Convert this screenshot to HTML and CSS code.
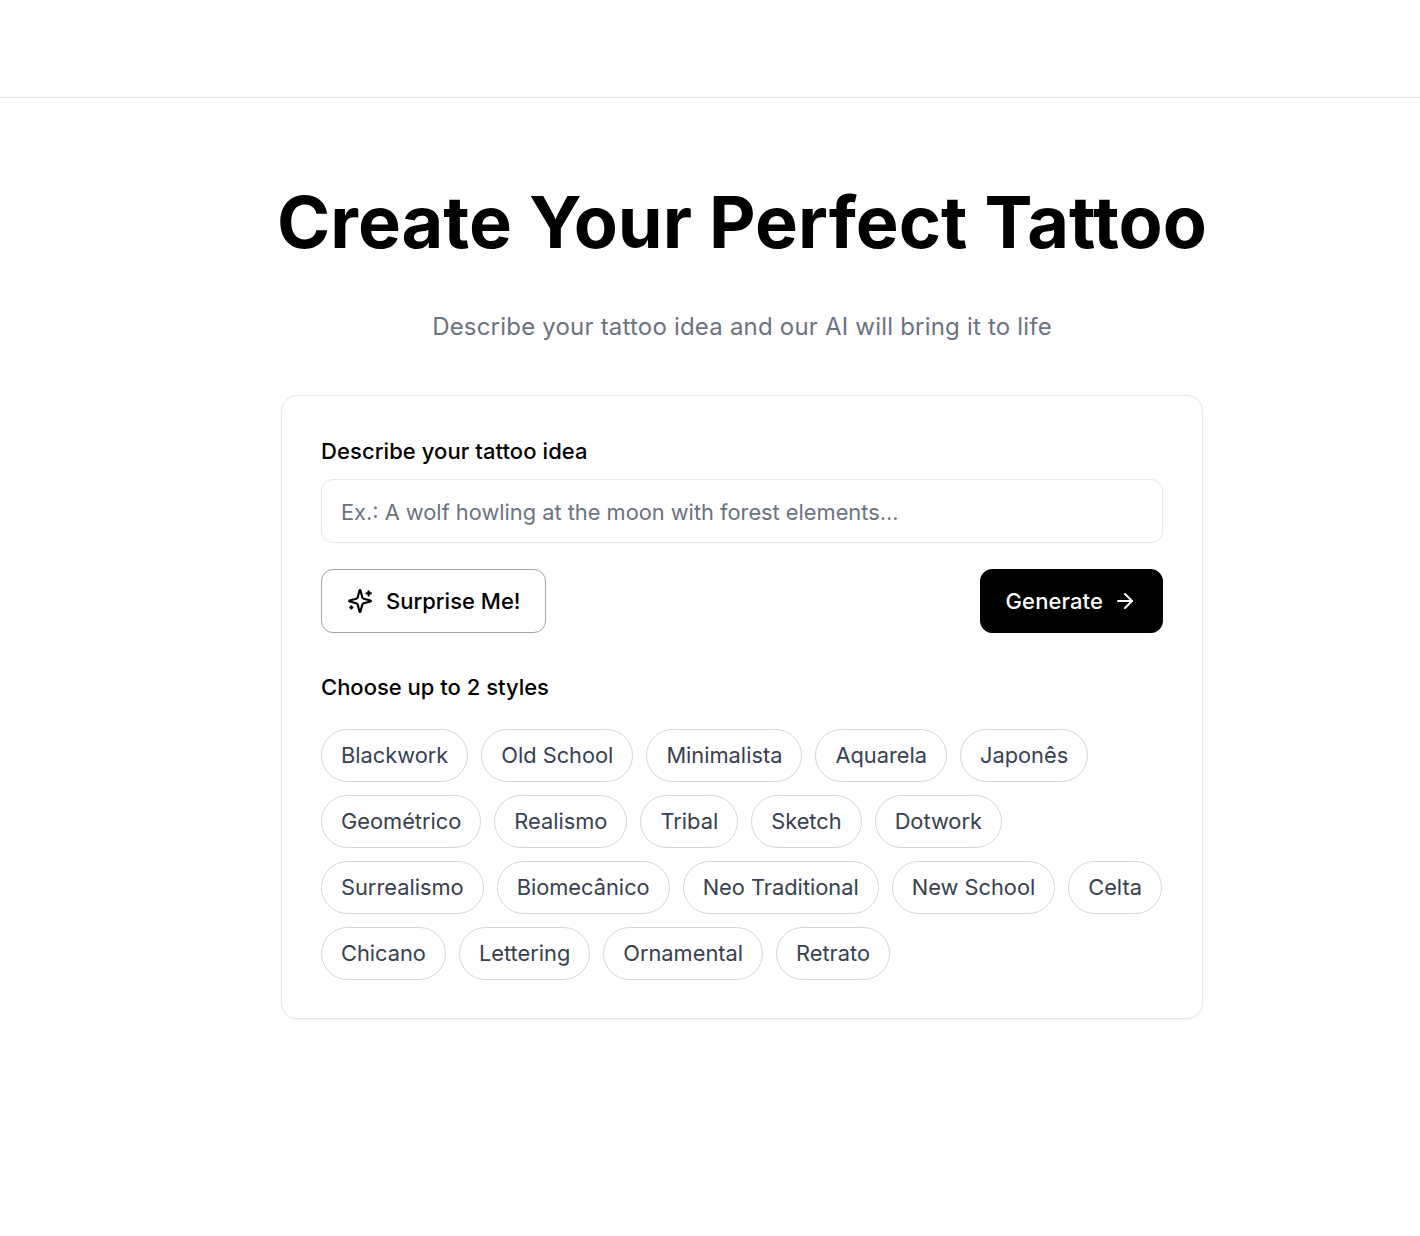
FILE: index.html
```html
<!DOCTYPE html>
<html lang="en">
<head>
<meta charset="utf-8">
<title>Create Your Perfect Tattoo</title>
<link rel="stylesheet" href="styles.css">
</head>
<body>
<header class="topbar"></header>
<main class="page">
  <h1 class="title">Create Your Perfect Tattoo</h1>
  <p class="subtitle">Describe your tattoo idea and our AI will bring it to life</p>
  <section class="card">
    <label class="label" for="idea">Describe your tattoo idea</label>
    <input class="idea" id="idea" type="text" placeholder="Ex.: A wolf howling at the moon with forest elements...">
    <div class="actions">
      <button class="btn btn-outline" type="button">
        <svg class="icon icon-spark" viewBox="0 0 24 24" fill="none" stroke="currentColor" stroke-width="2" stroke-linecap="round" stroke-linejoin="round"><path d="M9.937 15.5A2 2 0 0 0 8.5 14.063l-6.135-1.582a.5.5 0 0 1 0-.962L8.5 9.936A2 2 0 0 0 9.937 8.5l1.582-6.135a.5.5 0 0 1 .963 0L14.063 8.5A2 2 0 0 0 15.5 9.937l6.135 1.581a.5.5 0 0 1 0 .964L15.5 14.063a2 2 0 0 0-1.437 1.437l-1.582 6.135a.5.5 0 0 1-.963 0z"/><path d="M20 3v4"/><path d="M22 5h-4"/><path d="M4 17v2"/><path d="M5 18H3"/></svg>
        Surprise Me!
      </button>
      <button class="btn btn-solid" type="button">
        Generate
        <svg class="icon" viewBox="0 0 24 24" fill="none" stroke="currentColor" stroke-width="2" stroke-linecap="round" stroke-linejoin="round"><path d="M5 12h14"/><path d="m12 5 7 7-7 7"/></svg>
      </button>
    </div>
    <h2 class="label styles-label">Choose up to 2 styles</h2>
    <div class="chips">
      <button class="chip" type="button">Blackwork</button>
      <button class="chip" type="button">Old School</button>
      <button class="chip" type="button">Minimalista</button>
      <button class="chip" type="button">Aquarela</button>
      <button class="chip" type="button">Japonês</button>
      <button class="chip" type="button">Geométrico</button>
      <button class="chip" type="button">Realismo</button>
      <button class="chip" type="button">Tribal</button>
      <button class="chip" type="button">Sketch</button>
      <button class="chip" type="button">Dotwork</button>
      <button class="chip" type="button">Surrealismo</button>
      <button class="chip" type="button">Biomecânico</button>
      <button class="chip" type="button">Neo Traditional</button>
      <button class="chip" type="button">New School</button>
      <button class="chip" type="button">Celta</button>
      <button class="chip" type="button">Chicano</button>
      <button class="chip" type="button">Lettering</button>
      <button class="chip" type="button">Ornamental</button>
      <button class="chip" type="button">Retrato</button>
    </div>
  </section>
</main>
</body>
</html>
```
FILE: styles.css
```css
* { box-sizing: border-box; }
html, body { margin: 0; padding: 0; }
body {
  background: #fff;
  color: #000;
  font-family: Inter, "Liberation Sans", sans-serif;
  min-height: 1236px;
}
.topbar { height: 98px; border-bottom: 1px solid #e5e7eb; }
.page {
  width: 922px;
  margin-left: 281px;
  padding-top: 84px;
  display: flex;
  flex-direction: column;
  align-items: center;
}
.title {
  margin: 0;
  font-size: 72px;
  line-height: 80px;
  font-weight: 700;
  white-space: nowrap;
}
.subtitle {
  margin: 49px 0 0;
  font-size: 24px;
  line-height: 32px;
  letter-spacing: 0.2px;
  color: #6b7280;
}
.card {
  width: 100%;
  margin-top: 52px;
  padding: 39px 39px 38px;
  border: 1px solid #e5e7eb;
  border-radius: 16px;
  box-shadow: 0 1px 2px rgba(0,0,0,.05);
  background: #fff;
}
.label {
  display: block;
  margin: 0;
  font-size: 22px;
  line-height: 32px;
  font-weight: 500;
  letter-spacing: 0.08px;
}
.idea {
  display: block;
  width: 100%;
  height: 64px;
  margin-top: 12px;
  padding: 1px 19px 0;
  border: 1px solid #e5e7eb;
  border-radius: 12px;
  font: 400 21.8px Inter, sans-serif;
  color: #000;
  outline: none;
}
.idea::placeholder { color: #6b7280; opacity: 1; }
.actions {
  display: flex;
  justify-content: space-between;
  margin-top: 26px;
}
.btn {
  display: inline-flex;
  align-items: center;
  height: 64px;
  font: 500 22px Inter, sans-serif;
  border-radius: 12px;
  padding: 0 25px;
  cursor: pointer;
}
.btn-outline { background: #fff; color: #000; border: 1px solid #a3a3a3; gap: 13px; padding-right: 24px; }
.btn-solid { background: #000; color: #fff; border: 1px solid #000; gap: 10px; letter-spacing: 0.1px; }
.icon { width: 24px; height: 24px; flex: none; }
.icon-spark { width: 26px; height: 26px; }
.styles-label { margin-top: 38px; letter-spacing: 0; }
.chips {
  display: flex;
  flex-wrap: wrap;
  gap: 13px;
  margin-top: 26px;
}
.chip {
  height: 53px;
  padding: 0 19px 2px;
  border: 1px solid #d1d5db;
  border-radius: 999px;
  background: #fff;
  color: #374151;
  font: 400 21.8px Inter, sans-serif;
  cursor: pointer;
}
```
